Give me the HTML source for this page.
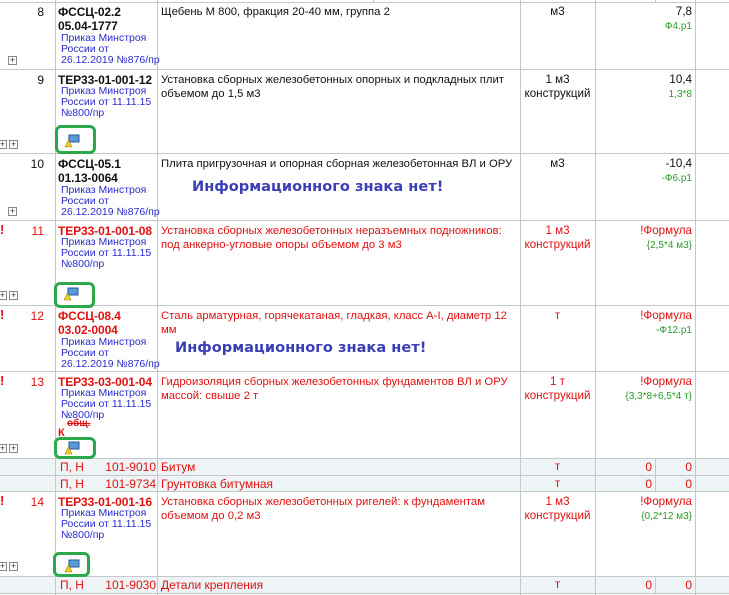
<!DOCTYPE html>
<html><head><meta charset="utf-8"><style>
*{margin:0;padding:0;box-sizing:border-box}
body{width:729px;height:595px;overflow:hidden;background:#fff;position:relative;font-family:"Liberation Sans","DejaVu Sans",sans-serif;font-size:12px;color:#111}
div{position:absolute}
.h{left:0;width:729px;height:1px;background:#c4c8cc}
.v{width:1px;background:#c4c8cc}
.sub{left:0;width:729px;background:#eef4f5}
.num{width:44px;text-align:right;left:0}
.code{left:58px;font-weight:bold;font-size:12px;letter-spacing:-0.1px;line-height:14px;white-space:nowrap}
.bl{left:61px;color:#2a2ad0;font-size:10.5px;line-height:11px;white-space:nowrap}
.desc{left:161px;width:358px;line-height:14px;font-size:11.3px}
.unit{left:520px;width:75px;text-align:center;line-height:14px;font-size:11.6px}
.val{left:595px;width:97px;text-align:right;line-height:14px;font-size:11.6px}
.gr{color:#2a9a2a;font-size:10px}
.red{color:#e01010}
.pl{width:9px;height:9px;border:1px solid #808890;background:#fff;font-size:9px;line-height:7px;text-align:center;color:#333}
.box{border:3px solid #2aa84a;border-radius:6px}
.info{font-family:"DejaVu Sans",sans-serif;font-weight:bold;font-size:14.6px;color:#3a3fb5;white-space:nowrap}
.ex{color:#e01010;font-weight:bold;font-size:13px;left:0}
</style></head><body>
<div class="sub" style="top:458px;height:33px"></div>
<div class="sub" style="top:576px;height:17px"></div>
<div class="h" style="top:2px"></div>
<div class="h" style="top:69px"></div>
<div class="h" style="top:153px"></div>
<div class="h" style="top:220px"></div>
<div class="h" style="top:305px"></div>
<div class="h" style="top:371px"></div>
<div class="h" style="top:458px"></div>
<div class="h" style="top:475px"></div>
<div class="h" style="top:491px"></div>
<div class="h" style="top:576px"></div>
<div class="h" style="top:593px"></div>
<div class="v" style="left:55px;top:0;height:595px"></div>
<div class="v" style="left:157px;top:0;height:595px"></div>
<div class="v" style="left:520px;top:0;height:595px"></div>
<div class="v" style="left:595px;top:0;height:595px"></div>
<div class="v" style="left:695px;top:0;height:595px"></div>
<div class="v" style="left:373px;top:0;height:2px"></div>
<div class="v" style="left:655px;top:0;height:2px"></div>
<div class="v" style="left:655px;top:458px;height:33px"></div>
<div class="v" style="left:655px;top:576px;height:17px"></div>

<div class="num" style="top:5px">8</div>
<div class="code" style="top:5px">ФССЦ-02.2<br>05.04-1777</div>
<div class="bl" style="top:33px">Приказ Минстроя<br>России от<br>26.12.2019 №876/пр</div>
<div class="desc" style="top:5px">Щебень М 800, фракция 20-40 мм, группа 2</div>
<div class="unit" style="top:5px">м3</div>
<div class="val" style="top:5px">7,8<br><span class="gr">Ф4.р1</span></div>
<div class="pl" style="left:8px;top:56px">+</div>

<div class="num" style="top:73px">9</div>
<div class="code" style="top:73px">ТЕР33-01-001-12</div>
<div class="bl" style="top:86px">Приказ Минстроя<br>России от 11.11.15<br>№800/пр</div>
<div class="desc" style="top:73px">Установка сборных железобетонных опорных и подкладных плит объемом до 1,5 м3</div>
<div class="unit" style="top:73px">1 м3<br>конструкций</div>
<div class="val" style="top:73px">10,4<br><span class="gr">1,3*8</span></div>
<div class="pl" style="left:-2px;top:140px">+</div>
<div class="pl" style="left:9px;top:140px">+</div>
<div class="box" style="left:55px;top:125px;width:41px;height:29px"></div>

<div class="num" style="top:157px">10</div>
<div class="code" style="top:157px">ФССЦ-05.1<br>01.13-0064</div>
<div class="bl" style="top:185px">Приказ Минстроя<br>России от<br>26.12.2019 №876/пр</div>
<div class="desc" style="top:157px">Плита пригрузочная и опорная сборная железобетонная ВЛ и ОРУ</div>
<div class="unit" style="top:157px">м3</div>
<div class="val" style="top:157px">-10,4<br><span class="gr">-Ф6.р1</span></div>
<div class="info" style="left:192px;top:178px">Информационного знака нет!</div>
<div class="pl" style="left:8px;top:207px">+</div>

<div class="ex" style="top:222px">!</div>
<div class="num red" style="top:224px">11</div>
<div class="code red" style="top:224px">ТЕР33-01-001-08</div>
<div class="bl" style="top:237px">Приказ Минстроя<br>России от 11.11.15<br>№800/пр</div>
<div class="desc red" style="top:224px">Установка сборных железобетонных неразъемных подножников: под анкерно-угловые опоры объемом до 3 м3</div>
<div class="unit red" style="top:224px">1 м3<br>конструкций</div>
<div class="val" style="top:224px"><span class="red">!Формула</span><br><span class="gr">{2,5*4 м3}</span></div>
<div class="pl" style="left:-2px;top:291px">+</div>
<div class="pl" style="left:9px;top:291px">+</div>
<div class="box" style="left:54px;top:282px;width:41px;height:26px"></div>

<div class="ex" style="top:307px">!</div>
<div class="num red" style="top:309px">12</div>
<div class="code red" style="top:309px">ФССЦ-08.4<br>03.02-0004</div>
<div class="bl" style="top:337px">Приказ Минстроя<br>России от<br>26.12.2019 №876/пр</div>
<div class="desc red" style="top:309px">Сталь арматурная, горячекатаная, гладкая, класс А-I, диаметр 12 мм</div>
<div class="unit red" style="top:309px">т</div>
<div class="val" style="top:309px"><span class="red">!Формула</span><br><span class="gr">-Ф12.р1</span></div>
<div class="info" style="left:175px;top:339px">Информационного знака нет!</div>

<div class="ex" style="top:373px">!</div>
<div class="num red" style="top:375px">13</div>
<div class="code red" style="top:375px">ТЕР33-03-001-04</div>
<div class="bl" style="top:388px">Приказ Минстроя<br>России от 11.11.15<br>№800/пр</div>
<div class="red" style="left:67px;top:418px;font-size:10px;font-weight:bold;text-decoration:line-through">общ.</div>
<div class="red" style="left:58px;top:427px;font-size:11px;font-weight:bold">К</div>
<div class="desc red" style="top:375px">Гидроизоляция сборных железобетонных фундаментов ВЛ и ОРУ массой: свыше 2 т</div>
<div class="unit red" style="top:375px">1 т<br>конструкций</div>
<div class="val" style="top:375px"><span class="red">!Формула</span><br><span class="gr">{3,3*8+6,5*4 т}</span></div>
<div class="pl" style="left:-2px;top:444px">+</div>
<div class="pl" style="left:9px;top:444px">+</div>
<div class="box" style="left:54px;top:437px;width:42px;height:22px"></div>

<div class="red" style="left:60px;top:460px">П, Н</div>
<div class="red" style="left:100px;width:56px;text-align:right;top:460px">101-9010</div>
<div class="red" style="left:161px;top:460px">Битум</div>
<div class="unit red" style="top:460px">т</div>
<div class="red" style="left:600px;width:52px;text-align:right;top:460px">0</div>
<div class="red" style="left:660px;width:32px;text-align:right;top:460px">0</div>

<div class="red" style="left:60px;top:477px">П, Н</div>
<div class="red" style="left:100px;width:56px;text-align:right;top:477px">101-9734</div>
<div class="red" style="left:161px;top:477px">Грунтовка битумная</div>
<div class="unit red" style="top:477px">т</div>
<div class="red" style="left:600px;width:52px;text-align:right;top:477px">0</div>
<div class="red" style="left:660px;width:32px;text-align:right;top:477px">0</div>

<div class="ex" style="top:493px">!</div>
<div class="num red" style="top:495px">14</div>
<div class="code red" style="top:495px">ТЕР33-01-001-16</div>
<div class="bl" style="top:508px">Приказ Минстроя<br>России от 11.11.15<br>№800/пр</div>
<div class="desc red" style="top:495px">Установка сборных железобетонных ригелей: к фундаментам объемом до 0,2 м3</div>
<div class="unit red" style="top:495px">1 м3<br>конструкций</div>
<div class="val" style="top:495px"><span class="red">!Формула</span><br><span class="gr">{0,2*12 м3}</span></div>
<div class="pl" style="left:-2px;top:562px">+</div>
<div class="pl" style="left:9px;top:562px">+</div>
<div class="box" style="left:53px;top:552px;width:37px;height:25px"></div>

<div class="red" style="left:60px;top:578px">П, Н</div>
<div class="red" style="left:100px;width:56px;text-align:right;top:578px">101-9030</div>
<div class="red" style="left:161px;top:578px">Детали крепления</div>
<div class="unit red" style="top:578px">т</div>
<div class="red" style="left:600px;width:52px;text-align:right;top:578px">0</div>
<div class="red" style="left:660px;width:32px;text-align:right;top:578px">0</div>

<svg style="position:absolute;left:64px;top:134px" width="16" height="14"><rect x="5" y="1" width="10" height="7" fill="#5a9ad8" stroke="#2a5a9a"/><path d="M1 13 L4.5 6 L8 13Z" fill="#f2d020" stroke="#a08000" stroke-width=".6"/></svg>
<svg style="position:absolute;left:63px;top:287px" width="16" height="14"><rect x="5" y="1" width="10" height="7" fill="#5a9ad8" stroke="#2a5a9a"/><path d="M1 13 L4.5 6 L8 13Z" fill="#f2d020" stroke="#a08000" stroke-width=".6"/></svg>
<svg style="position:absolute;left:64px;top:441px" width="16" height="14"><rect x="5" y="1" width="10" height="7" fill="#5a9ad8" stroke="#2a5a9a"/><path d="M1 13 L4.5 6 L8 13Z" fill="#f2d020" stroke="#a08000" stroke-width=".6"/></svg>
<svg style="position:absolute;left:64px;top:559px" width="16" height="14"><rect x="5" y="1" width="10" height="7" fill="#5a9ad8" stroke="#2a5a9a"/><path d="M1 13 L4.5 6 L8 13Z" fill="#f2d020" stroke="#a08000" stroke-width=".6"/></svg>
</body></html>
